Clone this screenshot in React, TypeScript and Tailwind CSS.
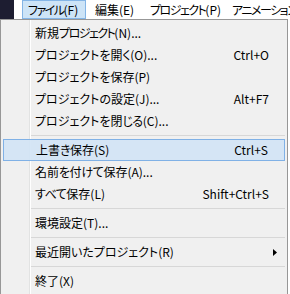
import { ReactNode } from 'react';

type Item = { label: string; shortcut?: string; active?: boolean; sub?: boolean } | 'sep';

const items: Item[] = [
  { label: '新規プロジェクト(N)...' },
  { label: 'プロジェクトを開く(O)...', shortcut: 'Ctrl+O' },
  { label: 'プロジェクトを保存(P)' },
  { label: 'プロジェクトの設定(J)...', shortcut: 'Alt+F7' },
  { label: 'プロジェクトを閉じる(C)...' },
  'sep',
  { label: '上書き保存(S)', shortcut: 'Ctrl+S', active: true },
  { label: '名前を付けて保存(A)...' },
  { label: 'すべて保存(L)', shortcut: 'Shift+Ctrl+S' },
  'sep',
  { label: '環境設定(T)...' },
  'sep',
  { label: '最近開いたプロジェクト(R)', sub: true },
  'sep',
  { label: '終了(X)' },
];

// Meiryo UI draws kana narrower than ideographs, so squeeze the kana runs
function Jp({ text }: { text: string }) {
  return (
    <>
      {text.split(/([\u3040-\u30ff]+)/).map((part, i) => {
        if (/^[\u30a0-\u30ff]+$/.test(part))
          return (
            <span key={i} className="tracking-[-1.5px]">
              {part}
            </span>
          );
        if (/^[\u3040-\u309f]+$/.test(part))
          return (
            <span key={i} className="tracking-[-0.5px]">
              {part}
            </span>
          );
        return part;
      })}
    </>
  );
}

function BarItem({ children, w, open }: { children: ReactNode; w: string; open?: boolean }) {
  return (
    <div
      className={
        'shrink-0 flex items-center ' +
        w +
        (open ? ' pl-[5px] border border-[#84b5e6] bg-[#cde4f7]' : ' pl-[7px]')
      }
    >
      {children}
    </div>
  );
}

export default function App() {
  return (
    <div className="w-[290px] h-[294px] overflow-hidden bg-white text-[12px] text-black font-['Noto_Sans_CJK_JP',sans-serif] [font-feature-settings:'palt'] leading-none">
      {/* menu bar */}
      <div className="flex h-[19px] bg-white whitespace-nowrap overflow-hidden">
        <div className="shrink-0 w-[14px] bg-[#1d1d31]" />
        <div className="shrink-0 w-[8px]" />
        <BarItem w="w-[64px]" open>
          <Jp text="ファイル(F)" />
        </BarItem>
        <div className="shrink-0 w-[2px]" />
        <BarItem w="w-[55px]">編集(E)</BarItem>
        <BarItem w="w-[82px]">
          <Jp text="プロジェクト(P)" />
        </BarItem>
        <BarItem w="w-[70px]">
          <Jp text="アニメーション" />
        </BarItem>
      </div>

      {/* dropdown */}
      <div className="w-[288px] border border-[#979797] bg-[#f0f0f0] px-[2px] pt-[2px] pb-[2px] bg-[linear-gradient(to_right,#f0f0f0_28px,#e2e3e3_28px,#e2e3e3_29px,#ffffff_29px,#ffffff_30px,#f0f0f0_30px)]">
        {items.map((it, i) =>
          it === 'sep' ? (
            <div key={i} className="h-[7px] flex items-center pl-[28px]">
              <div className="h-px w-full bg-[#d7d7d7]" />
            </div>
          ) : (
            <div
              key={i}
              className={
                'relative h-[22px] flex items-center pl-[32px] pr-[16px] whitespace-nowrap ' +
                (it.active ? 'border border-[#80b1e6] bg-[#d1e3f5]/90 pl-[31px] pr-[15px]' : '')
              }
            >
              <span className="flex-1">
                <Jp text={it.label} />
              </span>
              {it.shortcut && <span>{it.shortcut}</span>}
              {it.sub && (
                <svg width="4" height="7" viewBox="0 0 4 7" className="mr-[-8px]">
                  <path d="M0 0 L4 3.5 L0 7 Z" fill="#000" />
                </svg>
              )}
            </div>
          )
        )}
      </div>
    </div>
  );
}
